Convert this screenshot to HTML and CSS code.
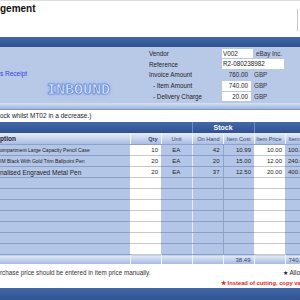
FILE: index.html
```html
<!DOCTYPE html>
<html lang="en">
<head>
  <meta charset="UTF-8">
  <meta name="viewport" content="width=device-width, initial-scale=1.0">
  <title>Stock Management</title>
  <link rel="stylesheet" href="styles.css">
</head>
<body>
  <div class="top">
    <h1 class="title">gement</h1>
    <div class="top-edge"></div>
  </div>
  <div class="bar"></div>

  <!-- receipt header -->
  <div class="panel">
    <div class="panel-left">
      <a class="link" href="#">s Receipt</a>
      <div class="stamp">INBOUND</div>
    </div>
    <div class="panel-right">
      <div class="field">
        <span class="label">Vendor</span>
        <span class="box box-code">V002</span>
        <span class="extra">eBay Inc.</span>
      </div>
      <div class="field">
        <span class="label">Reference</span>
        <span class="box box-ref">R2-080238982</span>
      </div>
      <div class="field">
        <span class="label">Invoice Amount</span>
        <span class="amount">760.00</span>
        <span class="extra">GBP</span>
      </div>
      <div class="field">
        <span class="label sub">- Item Amount</span>
        <span class="box amount">740.00</span>
        <span class="extra">GBP</span>
      </div>
      <div class="field">
        <span class="label sub">- Delivery Charge</span>
        <span class="box amount">20.00</span>
        <span class="extra">GBP</span>
      </div>
    </div>
  </div>
  <div class="strip"></div>
  <div class="memo">ock whilst MT02 in a decrease.)</div>

  <!-- line items -->
  <table class="items">
    <colgroup>
      <col class="c-desc"><col class="c-num"><col class="c-num"><col class="c-num"><col class="c-num"><col class="c-num"><col class="c-last">
    </colgroup>
    <thead>
      <tr class="group">
        <th colspan="3"></th>
        <th colspan="2" class="stock">Stock</th>
        <th colspan="2" class="rest"></th>
      </tr>
      <tr class="heads">
        <th class="desc">ption</th>
        <th class="num strong">Qty</th>
        <th class="mid">Unit</th>
        <th class="num">On Hand</th>
        <th class="num">Item Cost</th>
        <th class="num">Item Price</th>
        <th class="left">Item Amount</th>
      </tr>
    </thead>
    <tbody>
      <tr>
        <td class="desc tiny">ompartment Large Capacity Pencil Case</td>
        <td class="num white">10</td><td class="mid">EA</td><td class="num split">42</td><td class="num">10.99</td><td class="num white">10.00</td><td class="left">100.00</td>
      </tr>
      <tr>
        <td class="desc tiny">IM Black With Gold Trim Ballpoint Pen</td>
        <td class="num white">20</td><td class="mid">EA</td><td class="num split">20</td><td class="num">15.00</td><td class="num white">12.00</td><td class="left">240.00</td>
      </tr>
      <tr>
        <td class="desc">nalised Engraved Metal Pen</td>
        <td class="num white">20</td><td class="mid">EA</td><td class="num split">37</td><td class="num">12.50</td><td class="num white">20.00</td><td class="left">400.00</td>
      </tr>
      <tr><td class="desc"></td><td class="white"></td><td></td><td class="split"></td><td></td><td class="white"></td><td></td></tr>
      <tr><td class="desc"></td><td class="white"></td><td></td><td class="split"></td><td></td><td class="white"></td><td></td></tr>
      <tr><td class="desc"></td><td class="white"></td><td></td><td class="split"></td><td></td><td class="white"></td><td></td></tr>
      <tr><td class="desc"></td><td class="white"></td><td></td><td class="split"></td><td></td><td class="white"></td><td></td></tr>
      <tr><td class="desc"></td><td class="white"></td><td></td><td class="split"></td><td></td><td class="white"></td><td></td></tr>
      <tr><td class="desc"></td><td class="white"></td><td></td><td class="split"></td><td></td><td class="white"></td><td></td></tr>
      <tr><td class="desc"></td><td class="white"></td><td></td><td class="split"></td><td></td><td class="white"></td><td></td></tr>
    </tbody>
    <tfoot>
      <tr>
        <td></td><td></td><td></td><td></td><td class="num">38.49</td><td></td><td class="left">740.00</td>
      </tr>
    </tfoot>
  </table>

  <div class="notes">
    <div class="note-row">
      <span>rchase price should be entered in item price manually.</span>
      <span class="note-right">★ Allow</span>
    </div>
    <div class="note-row warn">
      <span>★ Instead of cutting, copy values to</span>
    </div>
  </div>
  <div class="bar bar-bottom"></div>
</body>
</html>
```

FILE: styles.css
```css
html, body {
  margin: 0;
  padding: 0;
  overflow: hidden;
}
body {
  width: 300px;
  font-family: "Liberation Sans", Arial, sans-serif;
  font-size: 6.3px;
  color: #222;
  background: #fff;
}

/* Top title area */
.top {
  height: 36px;
  border-top: 1px solid #dcdcdc;
  display: flex;
  justify-content: space-between;
}
.title {
  margin: 0;
  padding-top: 2px;
  font-size: 10px;
  line-height: 12px;
  font-weight: bold;
  color: #111;
}
.top-edge {
  width: 2px;
  height: 22px;
  margin-top: 8px;
  border-left: 1px solid #c8c8c8;
}
.bar {
  height: 10px;
  background: linear-gradient(#4266a6, #2f5292);
}
.bar-bottom {
  height: 13px;
}

/* Receipt header panel */
.panel {
  height: 56px;
  display: flex;
  background-color: #b8c9e8;
}
.panel-left {
  width: 149px;
  display: flex;
  flex-direction: column;
}
.link {
  margin-top: 23px;
  color: #2f3fe0;
  text-decoration: none;
  font-size: 6.5px;
  line-height: 8px;
}
.stamp {
  margin-top: 6px;
  align-self: center;
  margin-left: 8px;
  font-family: "Liberation Mono", monospace;
  font-weight: bold;
  font-size: 15px;
  line-height: 14px;
  color: #dbe6fc;
  -webkit-text-stroke: 0.5px #4c70c6;
  text-shadow: 0 0 2px #6d92e2, 0 0 5px #8fb0f0;
}
.panel-right {
  flex: 1;
  padding-top: 1px;
}
.field {
  height: 10.8px;
  display: flex;
  align-items: center;
}
.label {
  width: 73px;
  color: #222;
}
.sub {
  width: 69px;
  padding-left: 4px;
}
.box {
  height: 9.5px;
  line-height: 9.5px;
  background: #fff;
  padding: 0 1px;
  box-sizing: border-box;
}
.box-code {
  width: 31px;
}
.box-ref {
  width: 62px;
}
.amount {
  width: 29px;
  text-align: right;
  padding-right: 3px;
  box-sizing: border-box;
}
.extra {
  margin-left: 3px;
  color: #333;
}

.strip {
  height: 7px;
  background: linear-gradient(#d6e1f3, #9db4de);
  border-bottom: 1px solid #7f97c6;
  box-sizing: border-box;
}
.memo {
  height: 12px;
  line-height: 12px;
  font-size: 6.5px;
  color: #222;
}

/* Items table */
.items {
  border-collapse: collapse;
  table-layout: fixed;
  width: 330px;
}
.c-desc { width: 130px; }
.c-num { width: 31px; }
.c-last { width: 45px; }
.items th,
.items td {
  padding: 0;
  overflow: hidden;
  white-space: nowrap;
}
.group th {
  height: 11px;
  background: linear-gradient(#4468a8, #2f5292);
  color: #fff;
  font-size: 7px;
  font-weight: bold;
}
.group .stock,
.group .rest {
  border-left: 1px solid #6f8cc4;
}
.heads th {
  height: 11px;
  background: linear-gradient(#e6edf8, #a9bde3);
  color: #34456a;
  font-size: 5.6px;
  font-weight: normal;
  border-right: 1px solid #f2f5fb;
  border-bottom: 1px solid #8ea2c9;
}
.heads .desc {
  font-size: 6.5px;
  font-weight: bold;
  color: #223;
}
.heads .strong {
  font-weight: bold;
}
.items tbody td {
  height: 10px;
  background-color: #b4c6e7;
  border-bottom: 1px solid #8c9ec3;
  font-size: 6px;
  color: #222;
}
.items tbody .white {
  background-color: #fff;
  border-bottom-color: #c9c9c9;
}
.items tbody .split {
  border-left: 1px solid #e6ecf7;
  border-right: 1px solid #90a3c8;
}
.items .desc {
  text-align: left;
  font-size: 6.5px;
}
.items .tiny {
  font-size: 5px;
}
.items .num {
  text-align: right;
  padding-right: 3px;
}
.items .mid {
  text-align: center;
}
.items .left {
  text-align: left;
  padding-left: 3px;
}
.items tfoot td {
  height: 9px;
  background: linear-gradient(#e2eaf7, #a3b8e0);
  color: #34456a;
  font-size: 6px;
  border-right: 1px solid #f2f5fb;
}

/* Notes */
.notes {
  height: 24px;
  padding-top: 3px;
  box-sizing: border-box;
}
.note-row {
  display: flex;
  justify-content: space-between;
  height: 11px;
  line-height: 11px;
  color: #333;
  font-size: 6.3px;
  white-space: nowrap;
}
.note-right {
  width: 17px;
  overflow: hidden;
  color: #222;
}
.warn {
  justify-content: flex-end;
  color: #e21c1c;
  font-weight: bold;
  font-size: 5.8px;
}
.warn span {
  width: 79px;
  overflow: hidden;
}
```
